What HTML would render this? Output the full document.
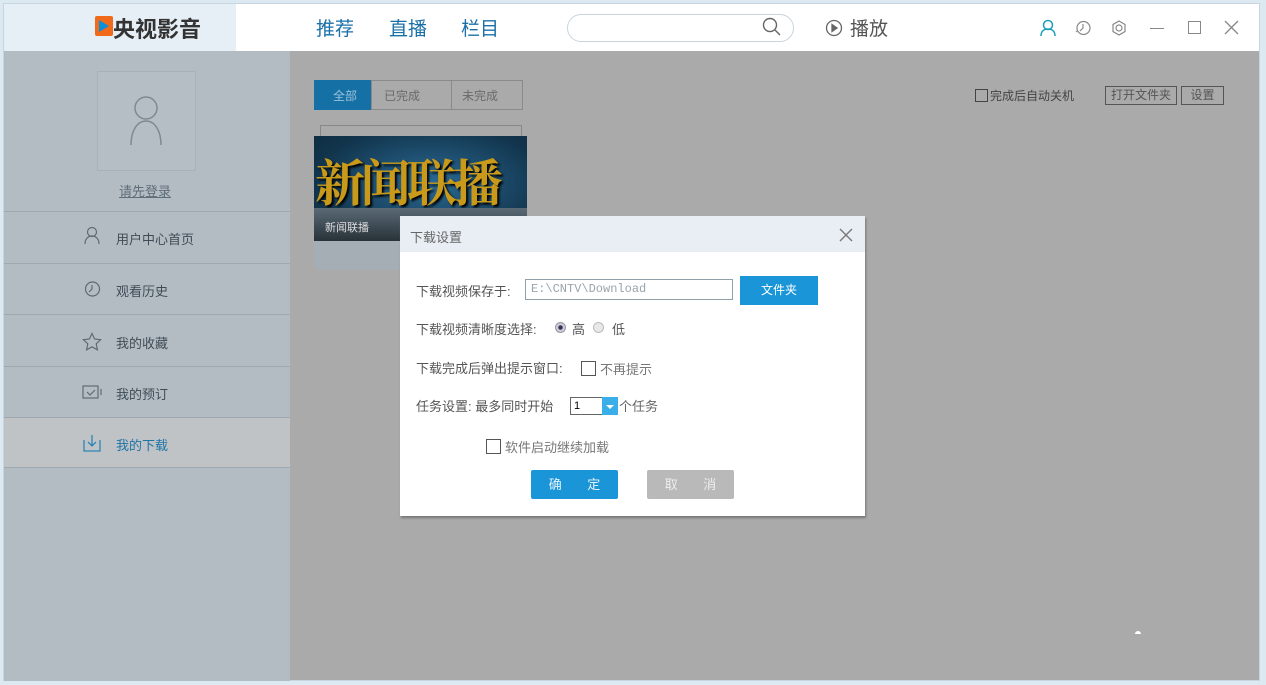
<!DOCTYPE html>
<html><head><meta charset="utf-8"><style>
*{margin:0;padding:0;box-sizing:border-box}
body{width:1266px;height:685px;overflow:hidden;background:#dde9f0;font-family:"Liberation Sans","Noto Sans CJK SC",sans-serif;position:relative}
.abs{position:absolute}
</style></head><body>
<div class="abs" style="left:3px;top:3px;width:1257px;height:678px;background:#aaaaaa;border:1px solid #c5d6e2"></div>
<div class="abs" style="left:4px;top:4px;width:232px;height:47px;background:#e7eff6"></div>
<div class="abs" style="left:236px;top:4px;width:1023px;height:47px;background:#fff"></div>
<div class="abs" style="left:95px;top:16px;width:18px;height:20px;background:#f06a1a;border-radius:2px"></div>
<div class="abs" style="left:99px;top:20px;width:0;height:0;border-left:10px solid #0a8fd8;border-top:6px solid transparent;border-bottom:6px solid transparent"></div>
<div class="abs" style="left:113px;top:12px;font-size:22px;font-weight:bold;color:#333">央视影音</div>
<div class="abs" style="left:316px;top:14px;font-size:19px;color:#1a70a8">推荐</div>
<div class="abs" style="left:389px;top:14px;font-size:19px;color:#1a70a8">直播</div>
<div class="abs" style="left:461px;top:14px;font-size:19px;color:#1a70a8">栏目</div>
<div class="abs" style="left:567px;top:14px;width:227px;height:28px;border:1px solid #c8d4dc;border-radius:14px"></div>
<svg class="abs" style="left:760px;top:15px" width="24" height="24" viewBox="0 0 24 24" fill="none" stroke="#666" stroke-width="1.4"><circle cx="10" cy="10" r="6.5"/><path d="M15 15l5 5"/></svg>
<svg class="abs" style="left:825px;top:19px" width="18" height="18" viewBox="0 0 18 18" fill="none" stroke="#666" stroke-width="1.3"><circle cx="9" cy="9" r="7.5"/><path d="M7 5.5v7l5-3.5z" fill="#666"/></svg>
<div class="abs" style="left:850px;top:14px;font-size:19px;color:#555">播放</div>
<svg class="abs" style="left:1038px;top:18px" width="20" height="20" viewBox="0 0 20 20" fill="none" stroke="#1aa0b8" stroke-width="1.5"><circle cx="10" cy="7" r="4.5"/><path d="M3 18c0-5 3-7 7-7s7 2 7 7"/></svg>
<svg class="abs" style="left:1074px;top:19px" width="18" height="18" viewBox="0 0 18 18" fill="none" stroke="#888" stroke-width="1.2"><circle cx="9.5" cy="9" r="6.5"/><path d="M9 5v4l-3 3M2 13l1-1"/></svg>
<svg class="abs" style="left:1110px;top:19px" width="18" height="18" viewBox="0 0 18 18" fill="none" stroke="#888" stroke-width="1.2"><path d="M9 2l6 3.5v7L9 16l-6-3.5v-7z"/><circle cx="9" cy="9" r="3"/></svg>
<div class="abs" style="left:1150px;top:28px;width:14px;height:1px;background:#888"></div>
<div class="abs" style="left:1188px;top:21px;width:13px;height:13px;border:1px solid #888"></div>
<svg class="abs" style="left:1224px;top:20px" width="15" height="15" viewBox="0 0 15 15" stroke="#888" stroke-width="1.3"><path d="M1 1l13 13M14 1L1 14"/></svg>
<div class="abs" style="left:4px;top:51px;width:286px;height:630px;background:#b4bcc3"></div>
<div class="abs" style="left:97px;top:71px;width:99px;height:100px;border:1px solid #a8b1b9;background:#b6bec5"></div>
<svg class="abs" style="left:100px;top:95px" width="92" height="52" viewBox="0 0 92 52" fill="none" stroke="#7c8a95" stroke-width="1.5"><circle cx="46" cy="13" r="11"/><path d="M31 50c0-14 6-24 15-24s15 10 15 24"/></svg>
<div class="abs" style="left:119px;top:181px;font-size:13px;color:#5f6d78;text-decoration:underline">请先登录</div>
<div class="abs" style="left:4px;top:211px;width:286px;height:1px;background:#9ea8b0"></div>
<div class="abs" style="left:4px;top:263px;width:286px;height:1px;background:#9ea8b0"></div>
<div class="abs" style="left:4px;top:314px;width:286px;height:1px;background:#9ea8b0"></div>
<div class="abs" style="left:4px;top:366px;width:286px;height:1px;background:#9ea8b0"></div>
<div class="abs" style="left:4px;top:417px;width:286px;height:51px;background:#bfc3c6;border-top:1px solid #9ea8b0;border-bottom:1px solid #9ea8b0"></div>
<svg class="abs" style="left:83px;top:226px" width="18" height="18" viewBox="0 0 18 18" fill="none" stroke="#5d6b76" stroke-width="1.2"><circle cx="9" cy="6" r="4.5"/><path d="M2 18c0-5 3-8 7-8s7 3 7 8"/></svg>
<div class="abs" style="left:116px;top:229px;font-size:13px;color:#3f4c56">用户中心首页</div>
<svg class="abs" style="left:83px;top:280px" width="18" height="18" viewBox="0 0 18 18" fill="none" stroke="#5d6b76" stroke-width="1.2"><circle cx="9.5" cy="9" r="7"/><path d="M9 5v4l-3 3"/></svg>
<div class="abs" style="left:116px;top:281px;font-size:13px;color:#3f4c56">观看历史</div>
<svg class="abs" style="left:82px;top:332px" width="20" height="20" viewBox="0 0 20 20" fill="none" stroke="#5d6b76" stroke-width="1.2"><path d="M10 1.5l2.6 5.5 6 .7-4.4 4.1 1.2 6L10 14.8 4.6 17.8l1.2-6L1.4 7.7l6-.7z"/></svg>
<div class="abs" style="left:116px;top:333px;font-size:13px;color:#3f4c56">我的收藏</div>
<svg class="abs" style="left:82px;top:384px" width="22" height="16" viewBox="0 0 22 16" fill="none" stroke="#5d6b76" stroke-width="1.2"><rect x="1" y="2" width="15" height="12"/><path d="M5 8l3 3 5-5M19 5v6"/></svg>
<div class="abs" style="left:116px;top:384px;font-size:13px;color:#3f4c56">我的预订</div>
<svg class="abs" style="left:82px;top:434px" width="20" height="18" viewBox="0 0 20 18" fill="none" stroke="#2a86b5" stroke-width="1.3"><path d="M2 6v11h16V6M10 1v11M6 8l4 4 4-4"/></svg>
<div class="abs" style="left:116px;top:435px;font-size:13px;color:#1f74a8">我的下载</div>
<div class="abs" style="left:314px;top:80px;width:57px;height:30px;background:#1570a6"></div>
<div class="abs" style="left:333px;top:87px;font-size:12px;color:#9cc2da">全部</div>
<div class="abs" style="left:371px;top:80px;width:152px;height:30px;border:1px solid #8a8a8a"></div>
<div class="abs" style="left:451px;top:80px;width:1px;height:30px;background:#8a8a8a"></div>
<div class="abs" style="left:384px;top:87px;font-size:12px;color:#6a6a6a">已完成</div>
<div class="abs" style="left:462px;top:87px;font-size:12px;color:#6a6a6a">未完成</div>
<div class="abs" style="left:320px;top:125px;width:202px;height:12px;border:1px solid #888;border-bottom:none"></div>
<div class="abs" style="left:314px;top:136px;width:213px;height:134px;background:#a6aeb5;border-radius:0 0 6px 6px"></div>
<div class="abs" style="left:314px;top:136px;width:213px;height:105px;background:radial-gradient(ellipse at 55% 45%,#2a6a95,#12354d 70%,#0e2a3c);overflow:hidden">
<div class="abs" style="left:1px;top:14px;font-size:50px;line-height:60px;font-weight:bold;color:#c99a1a;font-family:'Noto Serif CJK SC',serif;letter-spacing:-4px;text-shadow:2px 2px 2px #000">新闻联播</div>
<div class="abs" style="left:0;top:72px;width:213px;height:33px;background:linear-gradient(#5a6a76,#283238)"></div>
<div class="abs" style="left:11px;top:83px;font-size:11px;color:#ddd">新闻联播</div>
</div>
<div class="abs" style="left:975px;top:89px;width:13px;height:13px;border:1px solid #444"></div>
<div class="abs" style="left:990px;top:87px;font-size:12px;color:#444">完成后自动关机</div>
<div class="abs" style="left:1105px;top:86px;width:72px;height:19px;border:1px solid #555;font-size:12px;color:#555;text-align:center;line-height:17px">打开文件夹</div>
<div class="abs" style="left:1181px;top:86px;width:43px;height:19px;border:1px solid #555;font-size:12px;color:#555;text-align:center;line-height:17px">设置</div>
<div class="abs" style="left:1135px;top:631px;width:6px;height:3px;background:#fff;border-radius:3px 3px 0 0"></div>
<div class="abs" style="left:400px;top:216px;width:465px;height:300px;background:#fff;box-shadow:1px 2px 2px #777"></div>
<div class="abs" style="left:400px;top:216px;width:465px;height:36px;background:#e8eef4"></div>
<div class="abs" style="left:410px;top:227px;font-size:13px;color:#666">下载设置</div>
<svg class="abs" style="left:839px;top:228px" width="14" height="14" viewBox="0 0 14 14" stroke="#777" stroke-width="1.4"><path d="M1 1l12 12M13 1L1 13"/></svg>
<div class="abs" style="left:416px;top:281px;font-size:13px;color:#555">下载视频保存于:</div>
<div class="abs" style="left:525px;top:279px;width:208px;height:21px;border:1px solid #8fa0ab;font-family:'Liberation Mono',monospace;font-size:12px;color:#9aa4ab;padding-left:5px;line-height:19px">E:\CNTV\Download</div>
<div class="abs" style="left:740px;top:276px;width:78px;height:29px;background:#1a96d8;color:#fff;font-size:12px;text-align:center;line-height:29px">文件夹</div>
<div class="abs" style="left:416px;top:319px;font-size:13px;color:#555">下载视频清晰度选择:</div>
<div class="abs" style="left:555px;top:322px;width:11px;height:11px;border-radius:50%;border:1px solid #999;background:radial-gradient(#335 30%,#ccd 40%)"></div>
<div class="abs" style="left:572px;top:319px;font-size:13px;color:#555">高</div>
<div class="abs" style="left:593px;top:322px;width:11px;height:11px;border-radius:50%;border:1px solid #bbb;background:#e8e8e8"></div>
<div class="abs" style="left:612px;top:319px;font-size:13px;color:#555">低</div>
<div class="abs" style="left:416px;top:358px;font-size:13px;color:#555">下载完成后弹出提示窗口:</div>
<div class="abs" style="left:581px;top:361px;width:15px;height:15px;border:1px solid #555"></div>
<div class="abs" style="left:600px;top:359px;font-size:13px;color:#777">不再提示</div>
<div class="abs" style="left:416px;top:396px;font-size:13px;color:#555">任务设置: 最多同时开始</div>
<div class="abs" style="left:570px;top:397px;width:48px;height:18px;border:1px solid #666;border-right:none;font-size:11px;padding-left:3px;line-height:16px">1</div>
<div class="abs" style="left:602px;top:397px;width:16px;height:18px;background:#3aaee8"></div>
<div class="abs" style="left:606px;top:405px;border-top:4px solid #fff;border-left:4px solid transparent;border-right:4px solid transparent"></div>
<div class="abs" style="left:619px;top:396px;font-size:13px;color:#666">个任务</div>
<div class="abs" style="left:486px;top:439px;width:15px;height:15px;border:1px solid #555"></div>
<div class="abs" style="left:505px;top:437px;font-size:13px;color:#777">软件启动继续加载</div>
<div class="abs" style="left:531px;top:470px;width:87px;height:29px;background:#1a96d8;border-radius:2px;color:#e6f3fb;font-size:13px;line-height:29px;text-align:center;word-spacing:22px">确 定</div>
<div class="abs" style="left:647px;top:470px;width:87px;height:29px;background:#b9b9b9;border-radius:2px;color:#eee;font-size:13px;line-height:29px;text-align:center;word-spacing:22px">取 消</div>
</body></html>
